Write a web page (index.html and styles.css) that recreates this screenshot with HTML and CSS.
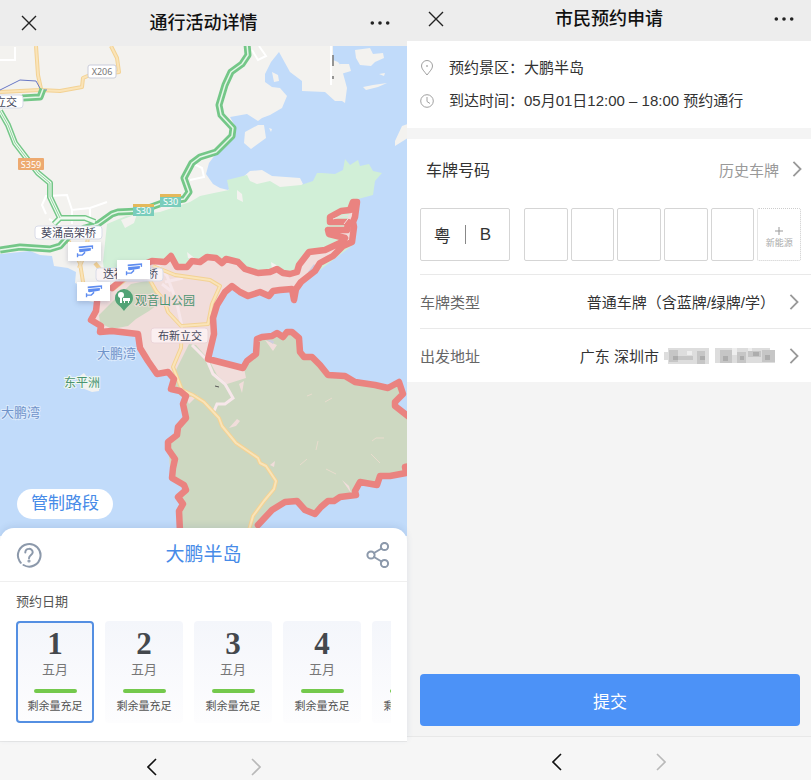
FILE: index.html
```html
<!DOCTYPE html>
<html lang="zh-CN">
<head>
<meta charset="utf-8">
<meta name="viewport" content="width=device-width, initial-scale=1">
<title>通行活动详情</title>
<link rel="stylesheet" href="styles.css">
</head>
<body>
<svg width="0" height="0" class="defs" aria-hidden="true">
  <symbol id="close" viewBox="0 0 16 16"><path d="M1 1 15 15M15 1 1 15"/></symbol>
  <symbol id="back" viewBox="0 0 10 18"><path d="M9 1 1 9 9 17"/></symbol>
  <symbol id="next" viewBox="0 0 10 18"><path d="M1 1 9 9 1 17"/></symbol>
  <symbol id="dots" viewBox="0 0 20 4"><circle cx="2.300" cy="2" r="1.800"/><circle cx="10" cy="2" r="1.800"/><circle cx="17.700" cy="2" r="1.800"/></symbol>
  <symbol id="camera" viewBox="0 0 20 14"><path d="M3 1.500 19 0V4L17.500 4.200V2L3 3.400Z"/><path d="M3.500 4.300 16.500 3V6L14 6.500 5 7.800 3.500 7.300Z"/><path d="M9.500 7V8.500L7 11H2M1.700 9V13.500" fill="none" stroke="#5e8cf0" stroke-width="1.500"/></symbol>
</svg>
<div class="screens">
  <main class="screen">
    <header class="bar bar-tall">
      <button class="icon-btn" aria-label="关闭"><svg class="i-close"><use href="#close"/></svg></button>
      <h1>通行活动详情</h1>
      <button class="icon-btn" aria-label="更多"><svg class="i-dots"><use href="#dots"/></svg></button>
    </header>
    <section class="map" aria-label="地图">
      <svg class="map-art" viewBox="0 46 407 490" preserveAspectRatio="xMidYMin slice">
        <rect y="46" width="407" height="490" fill="#c1dbfa"/>
        <g fill="#f3f2ef">
          <path d="M0 46H333V60L338 62 341 66 347 88 345 103 342 101 335 101 325 92 302 91V81L290 72 279 52 271 62 265 74 265 82 272 87 280 88 287 96 282 108 270 115 262 118 258 121 247 114 230 117 236 128 235 136 226 146 215 155 209 163 206 174 213 184 220 188 228 190 250 171 262 170 272 176 300 178 303 184 260 220 110 330 97 303 84 300 80 285 75 283 76 272 68 268 54 266 52 256 40 255 30 251 0 254Z"/>
          <path d="M355 50 370 48 373 54 383 53 384 58 375 62 371 66 360 65 356 58ZM340 64 349 64 351 71 341 74ZM363 87 373 85 387 83 378 87 366 90ZM379 74 385 73 384 76ZM245 132 258 125 264 125 266 138 251 149 244 143ZM272 72 278 75 279 81 274 82ZM269 128 272 129 271 132ZM395 141 402 126 408 124V138L395 146ZM77 378 84 373 90 381 99 387 99 391 92 392 82 388Z"/>
        </g>
        <path fill="#d1efd7" d="M107 224 126 216 160 212 190 202 200 196 214 193 229 190 227 180 247 175 250 181 257 184 270 181 280 187 301 185 313 181 317 173 322 173 335 174 343 170 345 159 350 165 358 160 360 166 369 164 373 171 382 173 375 181 373 195 358 199 353 245 300 285 105 277 103 262Z"/>
        <path fill="#f3f2ef" d="M121 220 137 214 134 223 125 228ZM237 190 242 194 243 202 237 199ZM271 262 278 266 272 270ZM187 252 197 260 188 258Z"/>

        <path fill="#f1dddb" d="M96 304 112 288 125 277 140 266 152 261 165 262 171 256 177 267 187 267 192 261 200 262 207 257 216 258 223 263 228 259 238 262 245 268 258 273 276 270 290 274 297 272 309 252 325 250 338 240 350 212 357 202 352 242 320 265 296 288 293 300 292 290 275 290 248 296 232 286 217 305 213 318 213 335 208 358 243 368 256 354 258 338 283 333 298 335 300 350 312 357 328 375 345 376 375 388 399 382 403 394 395 404 415 420V472L380 476 377 485 360 481 355 494 335 500 315 514 297 501 285 502 258 525 250 540H180V510L183 503 178 496 186 489 171 480 168 444 178 430 186 418 185 400 175 390 172 374 157 374 140 350 138 334 101 332 91 320Z"/>
        <path fill="#cdd8c1" d="M99 315 113 301 131 284 151 280 164 300 149 311 136 319 128 326 112 329 100 323ZM174 390 176 370 189 344 196 345 209 360 217 375 227 384 246 378 244 368 256 354 258 338 283 333 298 335 300 350 312 357 328 375 345 376 375 388 399 382 403 394 395 404 415 420V472L380 476 377 485 360 481 355 494 335 500 315 514 297 501 285 502 258 525 250 540H180V510L183 503 178 496 186 489 171 480 168 444 178 430 186 418 185 400Z"/>
        <path fill="#f1dddb" d="M229 428 237 419 240 421 236 426ZM186 398 198 395 189 404ZM265 340 277 345 273 351ZM342 480 349 486 351 493ZM239 384 244 381 242 393ZM270 465 275 461 274 467Z"/>
        <path d="M300 465 307 459M307 396 312 394M325 402 332 398M372 441 376 438 384 438M371 454 380 463M316 450 318 441M326 469 336 474" fill="none" stroke="#e8dccd"/>
        <path d="M308 272 314 264 317 268 310 274ZM266 339 274 341 273 344Z" fill="#cdcce0"/>

        <g fill="none" stroke="#fff" stroke-width="2">
          <path d="M0 60H15V47M46 214 42 205 46 196 67 195 72 210 90 208 107 202M72 210V224M90 209V218M252 50 258 60 266 56 259 46M192 163 202 168 204 177 190 180M331 46V85M49 219 60 225"/>
        </g>
        <g fill="none" stroke="#f7e7ea" stroke-width="3">
          <path d="M155 262 167 276 176 300 182 326M165 282 183 278M171 291 162 284M192 345 207 360 213 374 225 384 233 398 225 404 217 404 214 411"/>
        </g>
        <g fill="none" stroke-linejoin="round">
          <path stroke="#f3d294" stroke-width="4" d="M36 46 38 75 41 89M0 92 40 90 60 91 82 87 83 78 90 75M111 46 117 58 119 72 112 73M68 240 80 263 83 282 90 296M88 237 86 251 79 268M95 263 104 274M112 290 125 280 143 268 156 291 164 300 168 312 182 327 181 348 173 367 182 390 193 395 204 402 219 418 222 426 236 443 258 458 260 463 266 466 276 481 274 489 264 501 253 516 249 530M153 266 175 275 210 280 220 286 212 304 208 324 182 326"/>
          <path stroke="#fae4b8" stroke-width="2" d="M36 46 38 75 41 89M0 92 40 90 60 91 82 87 83 78 90 75M111 46 117 58 119 72 112 73M68 240 80 263 83 282 90 296M88 237 86 251 79 268M112 290 125 280 143 268 156 291 164 300 168 312 182 327 181 348 173 367 182 390 193 395 204 402 219 418 222 426 236 443 258 458 260 463 266 466 276 481 274 489 264 501 253 516 249 530M153 266 175 275 210 280 220 286 212 304 208 324 182 326"/>
          <path stroke="#6877c5" d="M0 90 20 80 36 81 41 90H47"/>
          <path stroke="#74c788" stroke-width="7" d="M247 44 248 55 242 64 231 72 225 85 219 105 221 115 233 128 232 136 216 152 200 157 192 163 184 178 189 192 184 199 165 202 140 211 118 212 112 214 98 224 85 228 69 236 60 246 50 249 20 247 0 250M22 98 40 97 43 89"/>
          <path stroke="#e5f6e8" stroke-width="1.500" d="M247 44 248 55 242 64 231 72 225 85 219 105 221 115 233 128 232 136 216 152 200 157 192 163 184 178 189 192 184 199 165 202 140 211 118 212 112 214 98 224 85 228 69 236 60 246 50 249 20 247 0 250M22 98 40 97 43 89"/>
          <path stroke="#74c788" stroke-width="6" d="M0 111 8 125 15 143 28 160 38 173 50 183 50 197 60 218 85 218 95 222M60 218 54 224"/>
          <path stroke="#effaf0" stroke-width="3" d="M0 111 8 125 15 143 28 160 38 173 50 183 50 197 60 218 85 218 95 222M60 218 54 224"/>
          <path stroke="#91d5a0" d="M0 111 8 125 15 143 28 160 38 173 50 183 50 197 60 218"/>
        </g>
        <path d="M333 55V66M333 76V79" stroke="#777" stroke-width="1.500"/><path d="M215 386 219 387" stroke="#555"/>

        <g fill="none" stroke="#ea8380" stroke-width="6.500" stroke-linejoin="round" stroke-linecap="round">
          <path d="M97 302 96 311 91 320 101 326 100 332 112 331 138 334 140 348 148 361 157 374 168 372 174 379 171 389 180 391 186 396 183 404 186 418 178 427 177 435 168 442 168 449 175 459 173 468 172 478 184 485 186 490 178 497 183 504 179 511 180 532"/>
          <path d="M112 288 125 277 140 266 152 261 165 262 171 256 177 267 187 267 192 261 200 262 207 257 216 258 222 263 226 259 238 262 245 269 258 273 270 272 277 269 283 273 290 274 297 272 299 265 309 252 325 250 340 243 345 238 329 234 328 230 347 230 348 222 330 222 330 217 341 211 350 210 353 202 357 202 355 217 353 222 354 227 352 242 343 246 333 256 320 263 315 271 301 282 296 289 294 300 292 289 280 290 273 291 269 296 260 292 248 296 240 292 232 286 225 292 217 305 213 318 214 334 208 359 243 368 247 361 256 354 257 339 262 337 272 336 277 333 283 337 287 332 292 332 299 338 300 352 304 357 312 357 320 365 328 375 345 376 355 382 375 385 388 388 399 382 403 394 395 402 395 406 409 417"/>
          <path d="M409 466 405 467 406 473 390 476 380 476 377 485 360 482 355 491 356 495 340 497 334 501 328 501 321 507 315 514 305 510 297 501 285 502 272 510 258 525"/>
        </g>
        <path d="M333 219 343 216 351 215 344 224" fill="none" stroke="#f1dddb"/>

        <g stroke="#d9dce8">
          <rect x="88" y="65" width="28" height="13" rx="2" fill="#fff" stroke="#c9ccda"/>
          <rect x="-10" y="95" width="33" height="13" rx="3" fill="#fff"/>
          <rect x="35" y="226" width="67" height="13" rx="3" fill="#fff"/>
          <rect x="96" y="268" width="67" height="13" rx="3" fill="#faf4f5"/>
          <rect x="151" y="328" width="57" height="15" rx="3" fill="#fbeff0" stroke="#ebd5d9"/>
        </g>
        <rect x="18" y="158" width="26" height="12" rx="1" fill="#edaa70"/>
        <path d="M133 204H154V216H133ZM160 194H181V207H160Z" fill="#79cdbc"/><path d="M133 204H154V207H133ZM160 194H181V197H160Z" fill="#e4b95b"/>
        <g class="map-road">
          <text x="102" y="75" fill="#777">X206</text><text x="31" y="168" fill="#fff">S359</text><text x="143.500" y="214" fill="#fff">S30</text><text x="170.500" y="205" fill="#fff">S30</text>
        </g>
        <g class="map-place">
          <text x="-5" y="106">立交</text><text x="41" y="237">葵涌高架桥</text><text x="103" y="278">迭福</text><text x="147" y="278">桥</text><text x="158" y="340">布新立交</text>
        </g>
        <path d="M124 311C119 304 115 304 115 298A9 9 0 0 1 133 298C133 304 128 305 124 311Z" fill="#51a376"/><g fill="#fff"><circle cx="121" cy="295" r="3"/><path d="M120 296H122V303H120ZM123 298H130V301H123ZM124 301H125V303H124ZM128 301H129V303H128Z"/></g>
        <g class="map-park"><text x="135" y="305" stroke="#f1dddb">观音山公园</text><text x="64" y="387" stroke="#eef7f2">东平洲</text></g>
        <g class="map-sea"><text x="97" y="358">大鹏湾</text><text x="1" y="417">大鹏湾</text></g>
      </svg>
      <button class="pin pin-a" aria-label="监控点一"><svg><use href="#camera"/></svg></button>
      <button class="pin pin-b" aria-label="监控点二"><svg><use href="#camera"/></svg></button>
      <button class="pin pin-c" aria-label="监控点三"><svg><use href="#camera"/></svg></button>
      <button class="roads">管制路段</button>
    </section>
    <section class="sheet">
      <div class="sheet-head">
        <button class="icon-btn" aria-label="帮助"><svg class="i-sheet" viewBox="0 0 26 26"><path d="M3.500 19A11.300 11.300 0 1 1 7.500 23M3.500 19 4.800 20.800"/><path d="M9.300 10.500C9.300 5.700 16.700 5.700 16.700 10.300 16.700 13 13 13 13 16.200"/><circle cx="13" cy="19" r=".6"/></svg></button>
        <h2>大鹏半岛</h2>
        <button class="icon-btn" aria-label="分享"><svg class="i-sheet" viewBox="0 0 26 26"><circle cx="6" cy="13" r="3.600"/><circle cx="19.500" cy="4.500" r="3.600"/><circle cx="19.500" cy="21.500" r="3.600"/><path d="M9 11 16.500 6.500M9 15 16.500 19.500"/></svg></button>
      </div>
      <div class="dates-wrap">
        <h3>预约日期</h3>
        <div class="dates">
          <button class="date date-on" aria-pressed="true"><b>1</b><span>五月</span><i></i><small>剩余量充足</small></button>
          <button class="date" aria-pressed="false"><b>2</b><span>五月</span><i></i><small>剩余量充足</small></button>
          <button class="date" aria-pressed="false"><b>3</b><span>五月</span><i></i><small>剩余量充足</small></button>
          <button class="date" aria-pressed="false"><b>4</b><span>五月</span><i></i><small>剩余量充足</small></button>
          <button class="date" aria-pressed="false"><b>5</b><span>五月</span><i></i><small>剩余量充足</small></button>
        </div>
      </div>
    </section>
    <nav class="pager pager-low">
      <button class="icon-btn" aria-label="后退"><svg class="i-nav"><use href="#back"/></svg></button>
      <button class="icon-btn off" aria-label="前进"><svg class="i-nav"><use href="#next"/></svg></button>
    </nav>
  </main>

  <main class="screen form-screen">
    <header class="bar">
      <button class="icon-btn" aria-label="关闭"><svg class="i-close"><use href="#close"/></svg></button>
      <h1>市民预约申请</h1>
      <button class="icon-btn" aria-label="更多"><svg class="i-dots"><use href="#dots"/></svg></button>
    </header>
    <section class="info">
      <p><svg viewBox="0 0 14 16"><path d="M7 15C4 11 1.500 9 1.500 6A5.500 5.500 0 0 1 12.500 6C12.500 9 10 11 7 15Z"/><circle cx="7" cy="6" r=".5"/></svg>预约景区：大鹏半岛</p>
      <p><svg viewBox="0 0 14 16"><circle cx="7" cy="8" r="6.300"/><path d="M7 4V8.500L10 10.500"/></svg>到达时间：05月01日12:00 – 18:00 预约通行</p>
    </section>
    <form class="form" id="apply">
      <div class="plate-head"><h2>车牌号码</h2><a href="#history">历史车牌<svg class="i-go"><use href="#next"/></svg></a></div>
      <div class="plate">
        <button type="button" class="region"><span>粤</span><i></i><span>B</span></button>
        <div class="cells">
          <input aria-label="号码第1位" maxlength="1"><input aria-label="号码第2位" maxlength="1"><input aria-label="号码第3位" maxlength="1"><input aria-label="号码第4位" maxlength="1"><input aria-label="号码第5位" maxlength="1">
          <button type="button" class="energy"><svg viewBox="0 0 10 10"><path d="M5 1V9M1 5H9"/></svg>新能源</button>
        </div>
      </div>
      <button type="button" class="row"><span class="label">车牌类型</span><span>普通车牌（含蓝牌/绿牌/学）</span><svg class="i-go"><use href="#next"/></svg></button>
      <button type="button" class="row"><span class="label">出发地址</span><span>广东 深圳市</span>
        <svg class="mask" viewBox="0 0 111 18" aria-label="已隐藏"><path fill="#ddd" d="M0 5H4V1H45V17H4V13H0ZM51 1H106V4H111V16H51Z"/><path fill="#c6c6c6" d="M5 3H14V15H5ZM14 9H29V13H14ZM33 4H41V17H33ZM56 3H68V16H56ZM73 5H82V16H73ZM84 4H97V10H84ZM98 3H111V15H98Z"/><path fill="#adadad" d="M9 9H14V13H9ZM36 9H41V13H36ZM59 9H64V14H59ZM89 5H95V9H89ZM76 9H80V13H76ZM101 8H106V13H101Z"/><path fill="#eee" d="M23 4H28V8H23ZM68 1H73V8H68ZM84 1H88V4H84Z"/></svg>
        <svg class="i-go"><use href="#next"/></svg></button>
    </form>
    <div class="submit"><button form="apply" type="button">提交</button></div>
    <nav class="pager">
      <button class="icon-btn" aria-label="后退"><svg class="i-nav"><use href="#back"/></svg></button>
      <button class="icon-btn off" aria-label="前进"><svg class="i-nav"><use href="#next"/></svg></button>
    </nav>
  </main>
</div>
</body>
</html>
```
FILE: styles.css
```css
* { box-sizing: border-box; }
body { margin: 0; font-family: "Liberation Sans", "Noto Sans CJK SC", sans-serif; color: #333; }
button, input { font: inherit; color: inherit; border: 0; padding: 0; margin: 0; background: none; }
button { cursor: pointer; }
h1, h2, h3, p { margin: 0; font-weight: 400; }
svg { display: block; fill: none; }
.defs { position: absolute; }

.screens { display: grid; grid-template-columns: 407fr 404fr; min-height: 100vh; }
.screen { display: flex; flex-direction: column; min-width: 0; background: #fff; }
.form-screen { background: #f4f4f4; }

.bar { display: flex; align-items: center; justify-content: space-between; height: 41px; padding: 0 17px 4px 21px; background: #ededed; }
.bar-tall { height: 46px; padding-bottom: 0; }
.bar h1 { font-size: 18px; line-height: 24px; font-weight: 500; color: #111; }
.icon-btn { display: flex; align-items: center; justify-content: center; }
.i-close { width: 16px; height: 16px; stroke: #222; stroke-width: 1.4; }
.i-dots { width: 20px; height: 4px; fill: #222; }

.map { position: relative; flex: 1; min-height: 300px; overflow: hidden; background: #c1dbfa; }
.map-art { position: absolute; inset: 0; width: 100%; height: 100%; font-family: "Noto Sans CJK SC", sans-serif; }
.map-road { font-size: 9px; text-anchor: middle; font-family: "Noto Sans", sans-serif; }
.map-place { font-size: 11px; fill: #45485c; }
.map-park { font-size: 12px; fill: #4c9470; stroke-width: 2px; paint-order: stroke; }
.map-sea { font-size: 13px; fill: #6f93c9; stroke: #dceafc; stroke-width: 2px; paint-order: stroke; }
.pin { position: absolute; display: flex; align-items: center; justify-content: center; width: 33px; height: 19px; background: #fff; box-shadow: 0 2px 5px rgba(70, 80, 120, .25); }
.pin svg { width: 18px; height: 13px; fill: #5e8cf0; }
.pin-a { left: 68px; top: 196px; }
.pin-b { left: 117px; top: 214px; }
.pin-c { left: 77px; top: 236px; }
.roads { position: absolute; left: 17px; bottom: 17px; height: 30px; padding: 0 14px; border-radius: 15px; background: #fff; color: #478be8; font-size: 17px; line-height: 30px; }

.sheet { position: relative; margin-top: -8px; border-radius: 14px 14px 0 0; background: #fff; box-shadow: 0 -2px 6px rgba(60, 90, 140, .12); }
.sheet-head { display: flex; align-items: center; justify-content: space-between; height: 54px; padding: 0 16px; border-bottom: 1px solid #efefef; }
.sheet-head h2 { font-size: 19px; line-height: 28px; color: #478be8; }
.i-sheet { width: 26px; height: 26px; stroke: #8c99ab; stroke-width: 2; stroke-linecap: round; }
.dates-wrap { padding: 10px 16px 18px; }
.dates-wrap h3 { font-size: 13px; line-height: 20px; color: #555; }
.dates { display: flex; gap: 11px; margin-top: 9px; overflow: hidden; }
.date { flex: 0 0 78px; display: flex; flex-direction: column; align-items: center; height: 102px; padding-top: 5px; border: 2px solid transparent; border-radius: 4px; background: linear-gradient(#f4f6fb, #fdfdfe) border-box; }
.date-on { border-color: #548fe2; }
.date b { font: bold 31px/32px "Liberation Serif", serif; color: #44484d; }
.date span { font-size: 13px; line-height: 20px; color: #777; }
.date i { width: 43px; height: 4px; margin: 9px 0 4px; border-radius: 2px; background: #74c94c; }
.date small { font-size: 11px; line-height: 18px; color: #555; white-space: nowrap; }

.pager { display: flex; align-items: center; justify-content: center; gap: 94px; height: 44px; padding-top: 7px; border-top: 1px solid #e8e8e8; background: #f6f6f6; }
.pager-low { height: 39px; padding-top: 12px; }
.i-nav { width: 10px; height: 18px; stroke: #111; stroke-width: 1.6; }
.off .i-nav { stroke: #b9b9b9; }

.info { display: grid; gap: 9px; padding: 15px 13px; background: #fff; }
.info p { display: flex; align-items: center; gap: 15px; font-size: 15px; line-height: 24px; }
.info svg { width: 14px; height: 16px; stroke: #a0a0a0; }
.form { margin-top: 11px; padding-left: 13px; background: #fff; }
.plate-head { display: flex; align-items: center; justify-content: space-between; height: 60px; padding: 0 9px 0 6px; }
.plate-head h2 { font-size: 16px; }
.plate-head a { display: flex; align-items: center; gap: 13px; font-size: 15px; color: #999; text-decoration: none; }
.i-go { width: 10px; height: 16px; stroke: #999; stroke-width: 2; }
.plate { display: flex; gap: 14px; padding: 9px 10px 13px 0; }
.region { flex: 0 0 90px; display: flex; align-items: center; justify-content: center; gap: 14px; height: 53px; padding-right: 5px; border: 1px solid #d5d5d5; border-radius: 2px; font-size: 17px; }
.region i { width: 1px; height: 19px; background: #888; }
.cells { flex: 1; display: grid; grid-template-columns: repeat(6, 1fr); gap: 3px; }
.cells input { width: 100%; min-width: 0; height: 53px; border: 1px solid #d5d5d5; border-radius: 2px; text-align: center; }
.energy { display: flex; flex-direction: column; align-items: center; justify-content: center; gap: 1px; padding-top: 5px; border: 1px dotted #ccc; border-radius: 2px; font-size: 9px; line-height: 12px; color: #aaa; }
.energy svg { width: 10px; height: 10px; stroke: #999; }
.row { display: flex; align-items: center; width: 100%; height: 54px; padding-right: 12px; border-top: 1px solid #e9e9e9; font-size: 15px; text-align: left; }
.row .label { margin-right: auto; color: #666; }
.row .i-go { margin-left: 14px; }
.mask { width: 111px; height: 18px; margin-left: 5px; }
.submit { margin-top: auto; padding: 0 11px 10px 13px; }
.submit button { display: block; width: 100%; height: 52px; border-radius: 4px; background: #4c92f7; color: #fff; font-size: 17px; }
```
